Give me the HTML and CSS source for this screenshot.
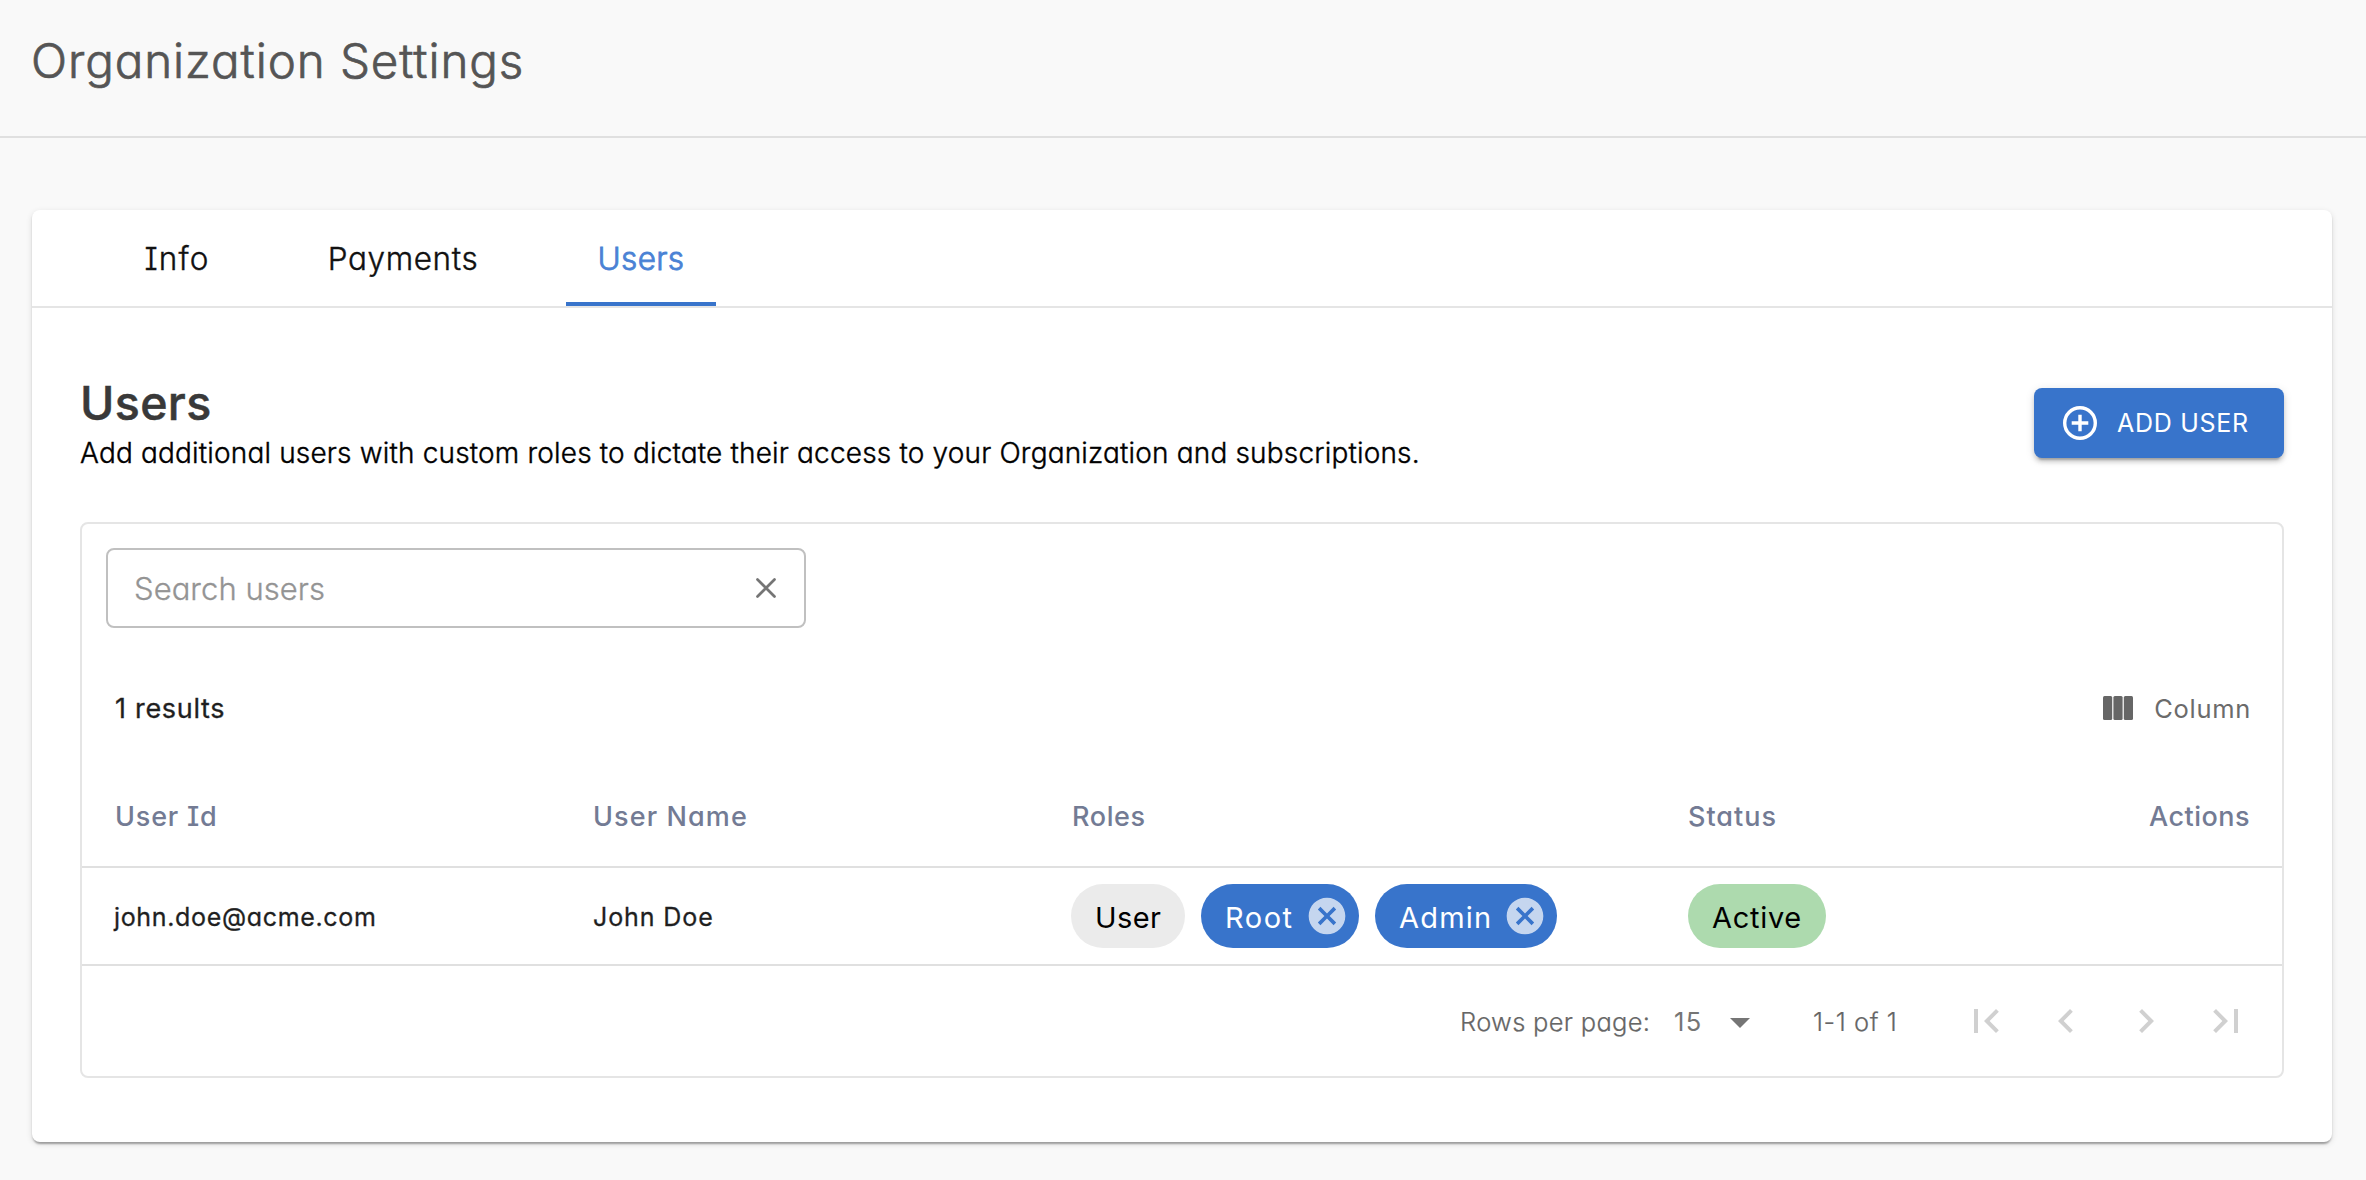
FILE: index.html
```
<!DOCTYPE html>
<html lang="en">
<head>
<meta charset="utf-8">
<title>Organization Settings</title>
<link rel="stylesheet" href="styles.css">
</head>
<body>
<header class="page-header"><h1 class="page-title">Organization Settings</h1></header>
<main class="main">
  <section class="card">
    <nav class="tabs">
      <a class="tab tab-info">Info</a>
      <a class="tab tab-payments">Payments</a>
      <a class="tab tab-users active">Users</a>
    </nav>
    <div class="panel">
      <div class="panel-head">
        <div>
          <h2 class="panel-title">Users</h2>
          <p class="panel-text">Add additional users with custom roles to dictate their access to your Organization and subscriptions.</p>
        </div>
        <button class="add-button">
          <svg width="34" height="34" viewBox="0 0 34 34" fill="none" stroke="#fff"><circle cx="17" cy="17" r="15.3" stroke-width="3.4"/><path d="M17 8.7v16.6M8.7 17h16.6" stroke-width="3.4"/></svg>
          <span>ADD USER</span>
        </button>
      </div>
      <div class="table-card">
        <div class="search">
          <span class="placeholder">Search users</span>
          <svg width="20" height="20" viewBox="0 0 20 20" fill="none" stroke="#757575" stroke-width="2.7" stroke-linecap="round"><path d="M1.5 1.5l17 17M18.5 1.5l-17 17"/></svg>
        </div>
        <div class="results-bar">
          <span class="results">1 results</span>
          <span class="column-button">
            <svg width="30" height="24" viewBox="0 0 30 24" fill="#666"><rect width="9.2" height="24" rx="1.5"/><rect x="10.4" width="9.2" height="24" rx="1.5"/><rect x="20.8" width="9.2" height="24" rx="1.5"/></svg>
            <span>Column</span>
          </span>
        </div>
        <div class="row head-row">
          <span class="h-id">User Id</span><span class="h-name">User Name</span><span class="h-roles">Roles</span><span class="h-status">Status</span><span class="h-actions">Actions</span>
        </div>
        <div class="row body-row">
          <span class="email">john.doe@acme.com</span>
          <span class="name">John Doe</span>
          <div class="chips">
            <span class="chip chip-user">User</span>
            <span class="chip chip-role chip-root"><span>Root</span><svg width="44" height="44" viewBox="0 0 24 24" fill="#c5d6ef"><path d="M12 2C6.47 2 2 6.47 2 12s4.47 10 10 10 10-4.47 10-10S17.53 2 12 2zm5 13.59L15.59 17 12 13.41 8.41 17 7 15.59 10.59 12 7 8.41 8.41 7 12 10.59 15.59 7 17 8.41 13.41 12 17 15.59z"/></svg></span>
            <span class="chip chip-role chip-admin"><span>Admin</span><svg width="44" height="44" viewBox="0 0 24 24" fill="#c5d6ef"><path d="M12 2C6.47 2 2 6.47 2 12s4.47 10 10 10 10-4.47 10-10S17.53 2 12 2zm5 13.59L15.59 17 12 13.41 8.41 17 7 15.59 10.59 12 7 8.41 8.41 7 12 10.59 15.59 7 17 8.41 13.41 12 17 15.59z"/></svg></span>
          </div>
          <div class="chips"><span class="chip chip-active">Active</span></div>
          <span></span>
        </div>
        <footer class="pagination">
          <span class="per-page">Rows per page:</span>
          <span class="page-size">15</span>
          <svg class="caret" width="20" height="10" viewBox="0 0 20 10" fill="#757575"><path d="M0 0h20L10 10z"/></svg>
          <span class="range">1-1 of 1</span>
          <div class="pager">
            <svg viewBox="0 0 24 24"><path d="M18.41 16.59L13.82 12l4.59-4.59L17 6l-6 6 6 6zM6 6h2v12H6z"/></svg>
            <svg viewBox="0 0 24 24"><path d="M15.41 7.41L14 6l-6 6 6 6 1.41-1.41L10.83 12z"/></svg>
            <svg viewBox="0 0 24 24"><path d="M8.59 16.59L13.17 12 8.59 7.41 10 6l6 6-6 6z"/></svg>
            <svg viewBox="0 0 24 24"><path d="M5.59 7.41L10.18 12l-4.59 4.59L7 18l6-6-6-6zM16 6h2v12h-2z"/></svg>
          </div>
        </footer>
      </div>
    </div>
  </section>
</main>
</body>
</html>
```
FILE: styles.css
```
* { box-sizing: border-box; }
body {
  margin: 0;
  min-height: 1180px;
  background: #f9f9f9;
  color: #1f1f1f;
  font-family: Inter, "Open Sans", sans-serif;
  font-feature-settings: "cv11", "cv08";
  white-space: nowrap;
}
h1, h2, p { margin: 0; }
svg { display: block; flex: none; }

.page-header { height: 138px; padding: 31px 31px 0; border-bottom: 2px solid #e0e0e0; }
.page-title { font-size: 47.5px; font-weight: 300; line-height: 60px; letter-spacing: .92px; color: #555; -webkit-text-stroke: .7px #555; }

.main { padding: 72px 34px 38px 32px; }
.card {
  height: 932px;
  background: #fff;
  border-radius: 8px;
  box-shadow: 0 4px 2px -2px rgba(0, 0, 0, .2), 0 2px 2px rgba(0, 0, 0, .14), 0 2px 6px rgba(0, 0, 0, .12);
}

.tabs { display: flex; gap: 56px; height: 98px; padding-left: 80px; border-bottom: 2px solid #e5e5e5; }
.tab { display: flex; align-items: center; justify-content: center; padding-top: 1px; font-size: 31.5px; font-weight: 300; color: #111; -webkit-text-stroke: .4px; }
.tab-info { width: 128px; padding-left: 2px; letter-spacing: 1.1px; }
.tab-payments { width: 214px; letter-spacing: .6px; }
.tab-users { width: 150px; letter-spacing: .3px; }
.active { padding-top: 5px; color: #4a82d5; border-bottom: 4px solid #3874cb; -webkit-text-stroke: .8px; }

.panel { padding: 65px 48px 0; }
.panel-head { display: flex; justify-content: space-between; align-items: center; height: 100px; }
.panel-title { font-size: 46.5px; font-weight: 500; line-height: 60px; letter-spacing: .35px; color: #393939; -webkit-text-stroke: .5px; }
.panel-text { font-size: 28px; font-weight: 300; line-height: 40px; letter-spacing: .17px; color: #000; -webkit-text-stroke: .4px; }
.add-button {
  display: flex; align-items: center; gap: 20px;
  width: 250px; height: 70px; padding: 0 0 0 29px;
  border: 0; border-radius: 8px; background: #3874cb; color: #fff;
  font: inherit; font-size: 25px; letter-spacing: .71px;
  box-shadow: 0 6px 2px -4px rgba(0, 0, 0, .2), 0 4px 4px rgba(0, 0, 0, .14), 0 2px 10px rgba(0, 0, 0, .12);
}

.table-card { height: 556px; margin-top: 49px; border: 2px solid #e5e5e5; border-radius: 8px; }
.search {
  display: flex; align-items: center; justify-content: space-between;
  width: 700px; height: 80px; margin: 24px 0 0 24px; padding: 0 28px 0 26px;
  border: 2px solid #c0c0c0; border-radius: 8px;
}
.placeholder { font-size: 31px; font-weight: 300; letter-spacing: .04px; color: #949494; -webkit-text-stroke: .3px; }
.results-bar { display: flex; align-items: center; justify-content: space-between; height: 140px; padding: 20px 31px 0 33px; }
.results { font-size: 27px; letter-spacing: .7px; -webkit-text-stroke: .3px; }
.column-button { display: flex; align-items: center; gap: 21px; font-size: 25.5px; letter-spacing: .7px; color: #6b6b6b; }

.row { display: grid; grid-template-columns: 479px 478px 617px 200px 1fr; align-items: center; padding: 0 32px; border-bottom: 2px solid #e0e0e0; }
.head-row { height: 100px; padding-bottom: 2px; font-size: 27px; font-weight: 500; color: #737b94; }
.h-id { padding-left: 1px; letter-spacing: .8px; }
.h-name { letter-spacing: 1.1px; }
.h-roles { padding-left: 1px; letter-spacing: .6px; }
.h-status { letter-spacing: 1px; }
.h-actions { letter-spacing: .49px; text-align: right; }
.body-row { height: 98px; font-size: 25px; }
.email, .name { padding-top: 2px; -webkit-text-stroke: .3px; }
.email { letter-spacing: .66px; }
.name { letter-spacing: .9px; }
.chips { display: flex; gap: 16px; }
.chip { display: flex; align-items: center; height: 64px; padding: 2px 0 0 24px; border-radius: 32px; font-size: 29px; color: #000; }
.chip-user { width: 114px; background: #ebebeb; letter-spacing: .4px; }
.chip-role { justify-content: space-between; padding: 0 10px 0 24px; background: #3874cb; color: #fff; }
.chip-role span { padding-top: 2px; }
.chip-root { width: 158px; letter-spacing: 1.5px; }
.chip-admin { width: 182px; letter-spacing: 1.2px; }
.chip-active { width: 138px; background: #addaae; letter-spacing: .7px; }

.pagination { display: flex; align-items: center; justify-content: flex-end; height: 110px; padding-right: 32px; font-size: 25.5px; font-weight: 300; color: #666; }
.per-page, .page-size, .range { padding-top: 1px; }
.per-page { width: 214px; letter-spacing: .3px; -webkit-text-stroke: .2px; }
.page-size { width: 56px; letter-spacing: 1.4px; font-weight: 400; color: #757575; }
.caret { margin: 4px 63px 0 0; }
.range { width: 149px; letter-spacing: .55px; -webkit-text-stroke: .2px; }
.pager { display: flex; gap: 32px; }
.pager svg { width: 48px; height: 48px; fill: #d0d0d0; }
```
